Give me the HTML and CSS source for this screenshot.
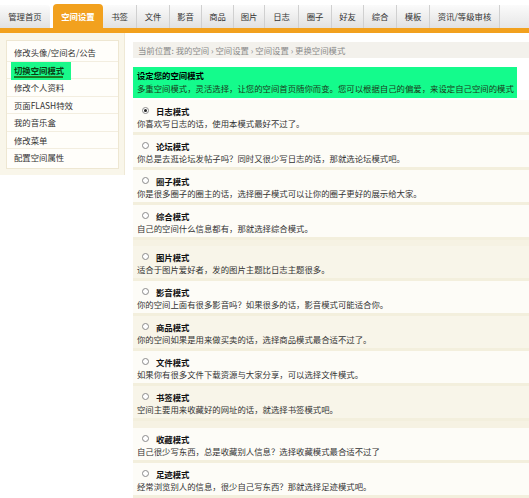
FILE: index.html
```html
<!DOCTYPE html>
<html lang="zh-CN">
<head>
<meta charset="utf-8">
<title>更换空间模式</title>
<link rel="stylesheet" href="styles.css">
</head>
<body>
<div class="nav">
  <a class="tab first w50">管理首页</a>
  <a class="tab active w50">空间设置</a>
  <a class="tab w34">书签</a>
  <a class="tab w33">文件</a>
  <a class="tab w32">影音</a>
  <a class="tab w32">商品</a>
  <a class="tab w31">图片</a>
  <a class="tab w34">日志</a>
  <a class="tab w33">圈子</a>
  <a class="tab w32">好友</a>
  <a class="tab w33">综合</a>
  <a class="tab w33">模板</a>
  <a class="tab w70">资讯/等级审核</a>
  <div class="tab-rest"></div>
</div>
<div class="layout">
  <div class="side">
    <ul class="menu">
      <li>修改头像/空间名/公告</li>
      <li><span class="cur">切换空间模式</span></li>
      <li>修改个人资料</li>
      <li>页面FLASH特效</li>
      <li>我的音乐盒</li>
      <li>修改菜单</li>
      <li>配置空间属性</li>
    </ul>
  </div>
  <div class="main">
    <div class="crumb">当前位置: 我的空间 › 空间设置 › 空间设置 › 更换空间模式</div>
    <div class="intro">
      <div class="intro-title">设定您的空间模式</div>
      <div class="intro-desc">多重空间模式，灵活选择，让您的空间首页随你而变。您可以根据自己的偏爱，来设定自己空间的模式</div>
    </div>
    <div class="rows">
      <div class="row"><div class="rt"><span class="radio on"></span>日志模式</div><div class="rd">你喜欢写日志的话，使用本模式最好不过了。</div></div>
      <div class="row"><div class="rt"><span class="radio"></span>论坛模式</div><div class="rd">你总是去逛论坛发帖子吗？同时又很少写日志的话，那就选论坛模式吧。</div></div>
      <div class="row"><div class="rt"><span class="radio"></span>圈子模式</div><div class="rd">你是很多圈子的圈主的话，选择圈子模式可以让你的圈子更好的展示给大家。</div></div>
      <div class="row"><div class="rt"><span class="radio"></span>综合模式</div><div class="rd">自己的空间什么信息都有，那就选择综合模式。</div></div>
      <div class="row alt gap"><div class="rt"><span class="radio"></span>图片模式</div><div class="rd">适合于图片爱好者，发的图片主题比日志主题很多。</div></div>
      <div class="row"><div class="rt"><span class="radio"></span>影音模式</div><div class="rd">你的空间上面有很多影音吗？如果很多的话，影音模式可能适合你。</div></div>
      <div class="row alt"><div class="rt"><span class="radio"></span>商品模式</div><div class="rd">你的空间如果是用来做买卖的话，选择商品模式最合适不过了。</div></div>
      <div class="row"><div class="rt"><span class="radio"></span>文件模式</div><div class="rd">如果你有很多文件下载资源与大家分享，可以选择文件模式。</div></div>
      <div class="row alt"><div class="rt"><span class="radio"></span>书签模式</div><div class="rd">空间主要用来收藏好的网址的话，就选择书签模式吧。</div></div>
      <div class="row gap2"><div class="rt"><span class="radio"></span>收藏模式</div><div class="rd">自己很少写东西，总是收藏别人信息？选择收藏模式最合适不过了</div></div>
      <div class="row"><div class="rt"><span class="radio"></span>足迹模式</div><div class="rd">经常浏览别人的信息，很少自己写东西？那就选择足迹模式吧。</div></div>
    </div>
  </div>
</div>
</body>
</html>
```

FILE: styles.css
```css
html, body {
  margin: 0;
  padding: 0;
  background: #ffffff;
}
body {
  font-family: "Noto Sans CJK SC", "Liberation Sans", sans-serif;
  font-size: 8.4px;
  color: #333;
  overflow: hidden;
  height: 498px;
}
.nav {
  display: flex;
  align-items: flex-end;
  height: 28px;
  border-bottom: 5px solid #f2a11e;
  background: #fff;
}
.tab {
  box-sizing: border-box;
  height: 23px;
  line-height: 22px;
  text-align: center;
  color: #333;
  background: linear-gradient(#fbfbfb, #e1e1e1);
  border-right: 1px solid #d0d0d0;
  white-space: nowrap;
  flex: none;
}
.tab.first {
  border-top-right-radius: 3px;
  margin-right: 3px;
  border-right: none;
}
.tab.active {
  height: 24px;
  line-height: 24px;
  background: #f2a11e;
  color: #fff;
  font-weight: bold;
  border-right: none;
  border-radius: 4px 4px 0 0;
}
.tab-rest {
  flex: 1;
  height: 23px;
  background: linear-gradient(#fbfbfb, #e6e6e6);
}
.w50 { width: 50px; }
.w34 { width: 34px; }
.w33 { width: 33px; }
.w32 { width: 32px; }
.w31 { width: 31px; }
.w70 { width: 70px; }

.layout {
  display: flex;
  align-items: flex-start;
  height: 465px;
}
.side {
  width: 125px;
  flex: none;
  box-sizing: border-box;
  background: #f9f6ea;
  padding: 7px 5px 6px 6px;
  border-right: 1px solid #efe9d6;
}
.menu {
  list-style: none;
  margin: 0;
  padding: 3px 0 0 0;
  background: #fffefa;
  border: 1px solid #eee7d2;
}
.menu li {
  height: 17.5px;
  line-height: 17.5px;
  padding-left: 7px;
  border-bottom: 1px solid #f3eee0;
  box-sizing: border-box;
  color: #333;
}
.menu li:last-child { border-bottom: none; height: 19px; }
.cur {
  display: inline-block;
  margin-left: -3px;
  padding: 0 7px 0 3px;
  background: #19f98a;
  color: #0b3d12;
  font-weight: bold;
  height: 18px;
  line-height: 16px;
  box-sizing: border-box;
  position: relative;
}
.cur::after {
  content: "";
  position: absolute;
  left: 3px;
  right: 8px;
  bottom: 2px;
  height: 2px;
  background: #1b7a22;
}

.main {
  flex: 1;
  padding-left: 8px;
  min-width: 0;
}
.crumb {
  margin-top: 9px;
  height: 16px;
  line-height: 16px;
  padding-left: 5px;
  background: #f3f1ec;
  color: #8a8a8a;
}
.intro {
  margin-top: 9px;
  width: 384px;
  box-sizing: border-box;
  height: 31px;
  padding: 2px 4px 0 4px;
  background: #14fb8c;
  color: #0b2a12;
}
.intro-title {
  font-weight: bold;
  line-height: 13px;
  color: #000;
}
.intro-desc {
  line-height: 13px;
  white-space: nowrap;
  color: #1a3a1a;
}
.rows {
  margin-top: 2px;
  background: #f6f2e3;
}
.row {
  height: 35px;
  box-sizing: border-box;
  padding: 4px 0 0 4px;
  background: #fdfcf7;
  border-bottom: 3px solid #f3efdd;
}
.row.alt { background: #f8f5e9; }
.row.gap { margin-top: 6px; }
.row.gap2 { margin-top: 7px; }
.rt {
  display: flex;
  align-items: center;
  height: 13px;
  padding-left: 5px;
  font-weight: bold;
  color: #111;
}
.rd {
  line-height: 13px;
  color: #333;
  white-space: nowrap;
}
.radio {
  width: 7px;
  height: 7px;
  box-sizing: border-box;
  border: 1px solid #8a8a8a;
  border-radius: 50%;
  background: #fff;
  margin-right: 7px;
  position: relative;
}
.radio.on::after {
  content: "";
  position: absolute;
  left: 1px;
  top: 1px;
  width: 3px;
  height: 3px;
  border-radius: 50%;
  background: #222;
}
```
